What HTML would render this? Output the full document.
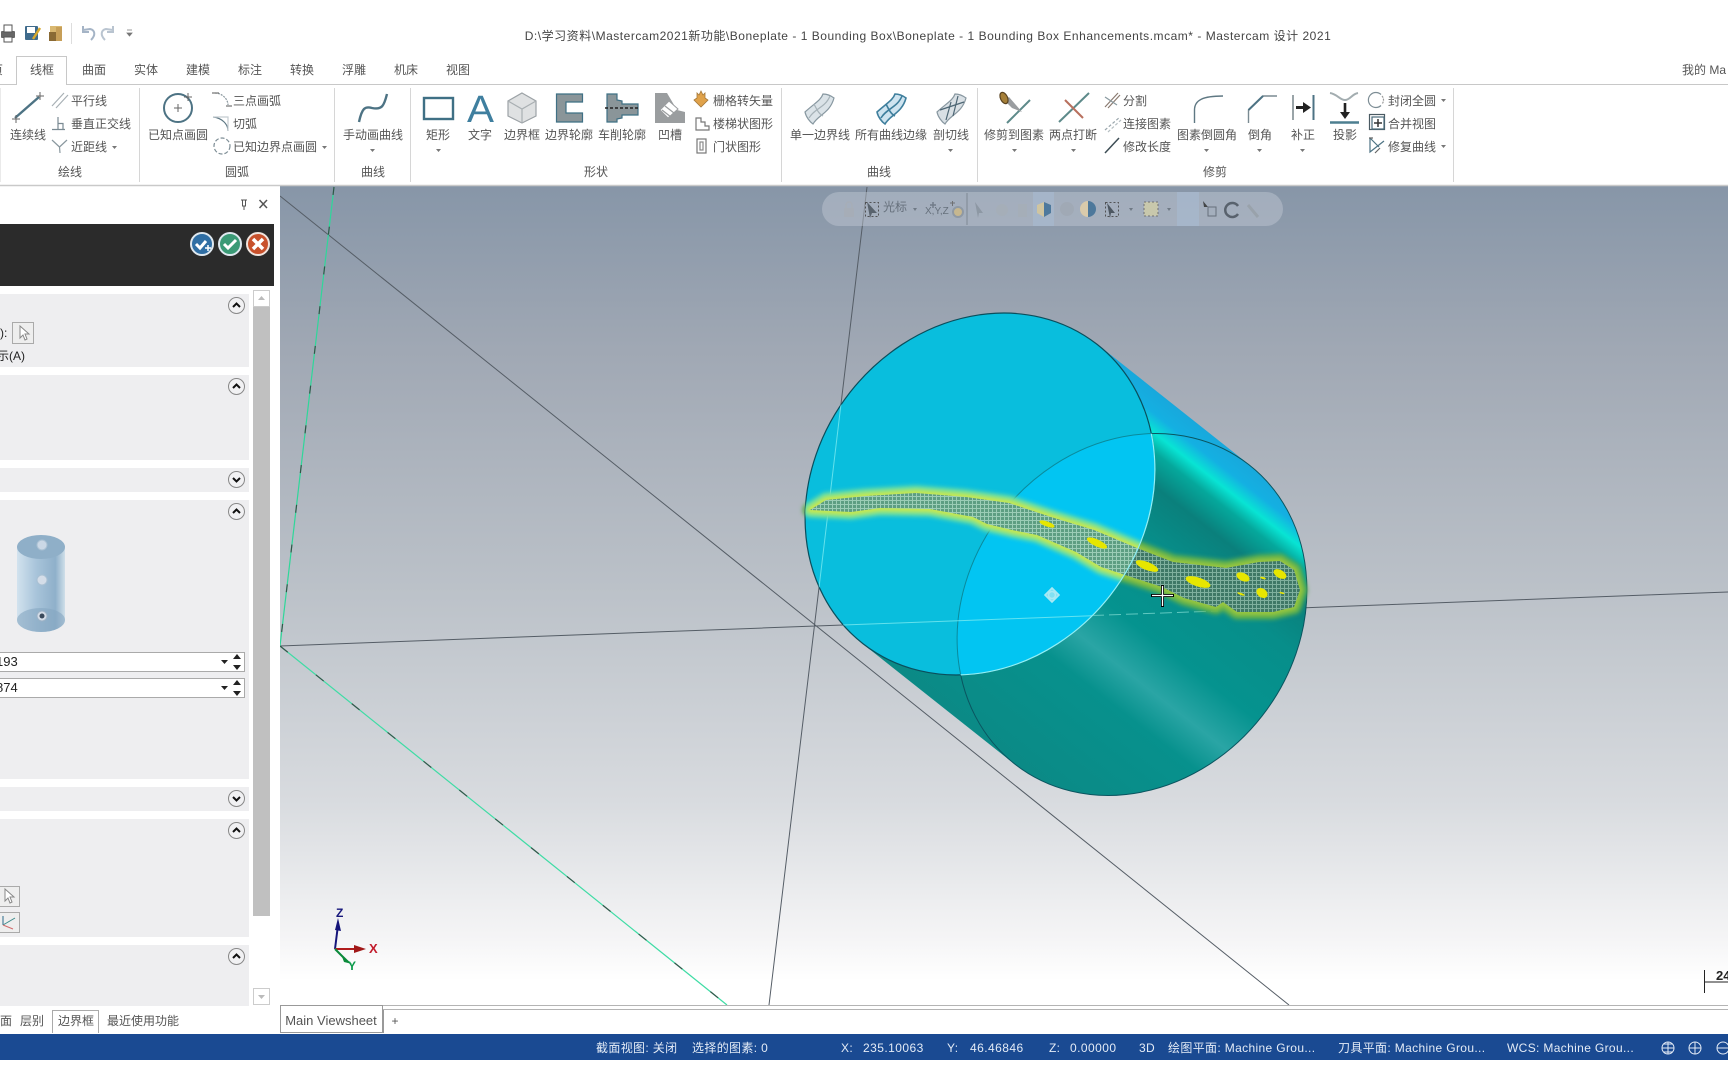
<!DOCTYPE html>
<html lang="zh"><head><meta charset="utf-8"><title>Mastercam 设计 2021</title>
<style>
html,body{margin:0;padding:0;background:#fff}
#p{position:relative;width:1728px;height:1080px;overflow:hidden;background:#fff;font-family:"Liberation Sans","Noto Sans CJK SC",sans-serif;font-size:12px;color:#555;filter:blur(.3px)}
.t{position:absolute;line-height:16px;white-space:nowrap}
.c{transform:translateX(-50%)}
.s{position:absolute;color:#e3ebf6;line-height:16px;top:1040px;white-space:nowrap;font-size:12px;letter-spacing:.35px}
.n{letter-spacing:.45px}
.sec{position:absolute;left:0;width:249px;background:#eeeef0}
.cb{position:absolute;left:228px;width:15px;height:15px;border:1px solid #888;border-radius:50%;background:#f1f1f3}
.cb svg{position:absolute;left:2px;top:2px}
.b{position:absolute;background:#fff;border:1px solid #aaa;box-sizing:border-box}
svg{position:absolute;left:0;top:0;display:block}
</style></head><body><div id="p">

<!-- viewport -->
<svg width="1728" height="1080" viewBox="0 0 1728 1080">
<defs>
<linearGradient id="bg" x1="0" y1="0" x2="0" y2="1">
<stop offset="0" stop-color="#8796a8"/><stop offset=".2" stop-color="#a0a8b4"/><stop offset=".5" stop-color="#bcc2c9"/><stop offset=".75" stop-color="#d8dbdf"/><stop offset=".92" stop-color="#f5f5f6"/><stop offset=".97" stop-color="#fff"/><stop offset="1" stop-color="#fff"/>
</linearGradient>
<linearGradient id="body" gradientUnits="userSpaceOnUse" x1="1173" y1="404" x2="939" y2="704">
<stop offset="0" stop-color="#18a8dc"/><stop offset=".05" stop-color="#14b0e2"/><stop offset=".09" stop-color="#08e4d4"/><stop offset=".13" stop-color="#05a89c"/><stop offset=".2" stop-color="#0a807c"/><stop offset=".32" stop-color="#078e8a"/><stop offset=".52" stop-color="#05938f"/><stop offset=".63" stop-color="#2aa5a5"/><stop offset=".72" stop-color="#07918d"/><stop offset="1" stop-color="#0b8a86"/>
</linearGradient>
<pattern id="hatchL" width="4" height="4" patternUnits="userSpaceOnUse"><rect width="4" height="4" fill="#5d9e82"/><path d="M0 .5H4M.5 0V4" stroke="#9bcdb6" stroke-width="1"/></pattern>
<pattern id="hatchD" width="4" height="4" patternUnits="userSpaceOnUse"><rect width="4" height="4" fill="#3f7866"/><path d="M0 .5H4M.5 0V4" stroke="#7fb09e" stroke-width="1"/></pattern>
<clipPath id="front"><ellipse cx="980" cy="494" rx="190" ry="165" transform="rotate(-52 980 494)"/></clipPath>
<clipPath id="rear"><ellipse cx="1132" cy="614.500" rx="190" ry="165" transform="rotate(-52 1132 614.500)"/></clipPath>
<filter id="bl" x="-5%" y="-20%" width="110%" height="140%"><feGaussianBlur stdDeviation="2"/></filter>
<path id="band" d="M810 510L826 500 866 496 916 493 966 497 1009 503 1051 517 1094 530 1137 548 1173 562 1226 568 1259 562 1280 561 1294 570 1300 590 1294 607 1273 612 1237 612 1223 602 1216 607 1184 598 1162 587 1125 575 1101 567 1076 552 1037 535 1012 530 987 524 973 517 930 509 880 508 851 512Z"/>
</defs>
<rect x="280" y="186" width="1448" height="819" fill="url(#bg)"/>
<g fill="none">
<path d="M280 196L1289 1005M867 187L769 1005M280 646L1728 592" stroke="#555d66" stroke-width="1"/>
<path d="M334 187L280 646" stroke="#2fd79a" stroke-width="1.200"/>
<path d="M334 187L280 646" stroke="#333" stroke-width="1.200" stroke-dasharray="8 32" opacity=".8"/>
<path d="M280 646L727 1005" stroke="#3fdca5" stroke-width="1.200"/>
<path d="M280 646L727 1005" stroke="#333" stroke-width="1.200" stroke-dasharray="10 36" opacity=".8"/>
</g>
<!-- cylinder -->
<path d="M1097 344L1249 464.500 1015 764.500 863 644Z" fill="url(#body)"/>
<rect x="900" y="400" width="450" height="420" fill="url(#body)" clip-path="url(#rear)"/>
<ellipse cx="1132" cy="614.500" rx="190" ry="165" transform="rotate(-52 1132 614.500)" fill="none" stroke="#0a5560" stroke-width="1"/>
<path d="M1092 615.500L1218 611" stroke="#5fc8c0" stroke-width="1" stroke-dasharray="12 5"/>
<use href="#band" fill="none" stroke="#5caf50" stroke-width="15" stroke-linejoin="round" filter="url(#bl)"/>
<use href="#band" fill="none" stroke="#9cc83c" stroke-width="6" stroke-linejoin="round" filter="url(#bl)"/>
<use href="#band" fill="url(#hatchD)"/>
<ellipse cx="980" cy="494" rx="190" ry="165" transform="rotate(-52 980 494)" fill="#09bedd" stroke="#0a4e5c" stroke-width="1.200"/>
<g clip-path="url(#front)">
<ellipse cx="1132" cy="614.500" rx="190" ry="165" transform="rotate(-52 1132 614.500)" fill="#02c5f2" stroke="#0a8a9c" stroke-width="1"/>
<path d="M867 187L769 1005M280 646L1728 592" stroke="#7beaf0" stroke-width="1" opacity=".8" fill="none"/>
<use href="#band" fill="none" stroke="#71e0a0" stroke-width="15" stroke-linejoin="round" filter="url(#bl)"/>
<use href="#band" fill="none" stroke="#cfe84a" stroke-width="6" stroke-linejoin="round" filter="url(#bl)"/>
<use href="#band" fill="url(#hatchL)"/>
</g>
<g clip-path="url(#rear)"><ellipse cx="980" cy="494" rx="190" ry="165" transform="rotate(-52 980 494)" fill="none" stroke="#8ff0f5" stroke-width="1.200"/></g>
<g fill="#e6e600">
<ellipse cx="1047" cy="524" rx="8" ry="2.500" transform="rotate(20 1047 524)"/>
<ellipse cx="1097" cy="543" rx="11" ry="3.500" transform="rotate(25 1097 543)"/>
<ellipse cx="1147" cy="566" rx="12" ry="4" transform="rotate(22 1147 566)"/>
<ellipse cx="1198" cy="582" rx="13" ry="4.500" transform="rotate(18 1198 582)"/>
<ellipse cx="1243" cy="577" rx="7" ry="4" transform="rotate(25 1243 577)"/>
<ellipse cx="1280" cy="574" rx="7" ry="4" transform="rotate(30 1280 574)"/>
<ellipse cx="1262" cy="593" rx="6" ry="4.500" transform="rotate(35 1262 593)"/>
<ellipse cx="1241" cy="594" rx="4" ry="1" transform="rotate(20 1241 594)"/>
<ellipse cx="1263" cy="578" rx="3" ry="1" transform="rotate(15 1263 578)"/>
<ellipse cx="1282" cy="593" rx="2.500" ry=".8" transform="rotate(15 1282 593)"/>
</g>
<g stroke="#000" stroke-width="3"><path d="M1151 595.500H1174M1162.500 585V607"/></g>
<g stroke="#fff" stroke-width="1.300"><path d="M1152 595.500H1173M1162.500 586V606"/></g>
<g transform="translate(1052 595)" fill="none" stroke="#bdeef5" stroke-width="1.600" opacity=".9"><path d="M0-7L7 0 0 7-7 0Z" fill="#8fe4f2"/><circle r="3.500"/></g>

<!-- floating toolbar -->
<rect x="822" y="192" width="461" height="34" rx="17" fill="#c4cad4" opacity=".45"/>
<rect x="1033" y="192" width="21" height="34" fill="#a8bcd4" opacity=".55"/>
<rect x="1177" y="192" width="22" height="34" fill="#a8bcd4" opacity=".55"/>
<path d="M967 193V225" stroke="#7e8894"/>
<g opacity=".85">
<rect x="844" y="208" width="10" height="9" rx="1" fill="#a7adb6"/><path d="M846 208v-3a3 3 0 0 1 6 0v3" fill="none" stroke="#a7adb6" stroke-width="1.500"/>
<path d="M867 202L877 213 872 213 870 218Z" fill="#4d5660"/><rect x="865.500" y="202.500" width="13" height="14" fill="none" stroke="#444" stroke-dasharray="2 2"/>
<path d="M913 208h4l-2 3ZM1129 208h4l-2 3ZM1167 208h4l-2 3ZM1043 208h4l-2 3Z" fill="#66707c"/>
<path d="M933 202v6M930 205h6" stroke="#6a7480" stroke-width="1.500"/>
<circle cx="958" cy="212" r="5" fill="#cdb988" stroke="#8c96a0" stroke-width="2"/><path d="M950 203h5M952.500 201v5" stroke="#666"/>
<path d="M975 202L983 213 979 213 978 218Z" fill="#8a94a0"/>
<circle cx="1002" cy="210" r="6" fill="#a6aeb8"/><rect x="1018" y="204" width="9" height="13" fill="#a6aeb8"/>
<path d="M1037 205l7-3 7 3v8l-7 4-7-4Z" fill="#d8c89a"/><path d="M1044 202l7 3v8l-7 4Z" fill="#3f6f96"/>
<circle cx="1067" cy="209" r="7" fill="#a0a9b4"/>
<path d="M1088 201a8 8 0 0 0 0 16Z" fill="#e3cfa8"/><path d="M1088 201a8 8 0 0 1 0 16Z" fill="#3f6f96"/>
<path d="M1107 203L1115 213 1111 213 1110 218Z" fill="#3e4852"/><rect x="1105.500" y="202.500" width="13" height="14" fill="none" stroke="#444" stroke-dasharray="2 2"/>
<rect x="1144" y="202" width="14" height="14" fill="#cfcdaa" stroke="#666" stroke-dasharray="2 2"/>
<path d="M1203 201L1208 207 1204 207Z" fill="#333"/><rect x="1208" y="207" width="8" height="9" fill="none" stroke="#5c6570"/>
<path d="M1238 206a7 7 0 1 0 0 8" fill="none" stroke="#4c5560" stroke-width="2.500"/>
<path d="M1248 205L1258 217" stroke="#98a0a8" stroke-width="3"/>
</g>

<!-- gizmo -->
<g fill="none" stroke-width="2"><path d="M335 949L338 925" stroke="#15157a"/><path d="M335 949H358" stroke="#b01c1c"/><path d="M335 949L346 960" stroke="#0b8a3a"/></g>
<path d="M335 930L338 918 341 931Z" fill="#15157a"/>
<path d="M354 945L366 949 354 953Z" fill="#a01818"/><path d="M341 954L352 964 344 962Z" fill="#0b8a3a"/>
<text x="336" y="917" font-family="Liberation Sans" font-weight="bold" font-size="12" fill="#15157a">Z</text>
<text x="369" y="953" font-family="Liberation Sans" font-weight="bold" font-size="13" fill="#c21c2c">X</text>
<text x="348" y="970" font-family="Liberation Sans" font-weight="bold" font-size="12" fill="#0b9a4a">Y</text>
<!-- ruler -->
<path d="M1704.500 970V993M1704.500 982H1728" stroke="#222" stroke-width="1"/>
<text x="1716" y="980" font-family="Liberation Sans" font-weight="bold" font-size="13" fill="#222">24</text>

<rect x="0" y="1005" width="1728" height="30" fill="#fff"/>
<path d="M280 1005.500H1728M280 1009.500H1728" stroke="#b4b4b4" stroke-width="1"/>
<rect x="0" y="1034" width="1728" height="26" fill="#1a4a92"/>
<rect x="0" y="186" width="280" height="820" fill="#fff"/>
<rect x="0" y="0" width="1728" height="186" fill="#fff"/>
<path d="M0 84.500H16.500V56.500H66.500V84.500H1728" fill="none" stroke="#c8c8c8"/>
<path d="M0 185.500H1728" stroke="#c9c9c9" stroke-width="1.500"/>
<path d="M139.500 88V182M334.500 88V182M410.500 88V182M781.500 88V182M977.500 88V182M1453.500 88V182" stroke="#d6d6d6" stroke-width="1"/>
<path d="M0 88V182" stroke="#d6d6d6" stroke-width="1"/>

<!-- quick access -->
<g>
<rect x="1" y="31" width="14" height="7" rx="1" fill="#666"/><rect x="4" y="25" width="8" height="7" fill="#fff" stroke="#555"/><rect x="4" y="37" width="8" height="5" fill="#fff" stroke="#555"/>
<rect x="25" y="26" width="13" height="14" rx="1" fill="#3f6b8c"/><rect x="27" y="27" width="8" height="6" fill="#fff"/><path d="M33 39L40 28" stroke="#d8a82c" stroke-width="2.500"/>
<rect x="50" y="26" width="12" height="6" fill="#d9b871"/><rect x="49" y="32" width="7" height="9" fill="#8a6a34"/><rect x="56" y="27" width="6" height="14" fill="#c79f58"/>
<path d="M71.500 23V44" stroke="#ddd"/>
<path d="M91 40c5-5 4-10-1-11l-7 1M83 26v6h6" fill="none" stroke="#a5b4c6" stroke-width="2"/>
<path d="M105 40c-5-5-4-10 1-11l7 1M113 26v6h-6" fill="none" stroke="#b9c4d0" stroke-width="2"/>
<path d="M127 30h5M127 33h5L129.500 36Z" fill="#777" stroke="#777" stroke-width=".8"/>
</g>

<!-- ribbon icons -->
<g fill="none" stroke="#4d7384" stroke-width="1.200">
<!-- continuous line -->
<path d="M15 118L39 97" stroke-width="2.400"/><path d="M36 96H44M40 92V100M12 119H20M16 115V123" stroke="#666" stroke-width="1"/>
<!-- parallel -->
<path d="M52 106L64 93M56 108L68 95" stroke="#a8b0b5"/>
<!-- perpendicular -->
<path d="M52 129.500H65M58 117V129.500M58 123.500H63V129.500" stroke="#7a8a92"/>
<!-- near -->
<path d="M52 140L59.500 147 67 140M59.500 147L60 153" stroke="#8a989f"/>
<!-- circle -->
<circle cx="178" cy="108" r="14" stroke-width="2"/><path d="M174 108H182M178 104V112M184 97H192M188 93V101" stroke="#666" stroke-width="1"/>
<!-- arcs -->
<path d="M215 93C222 93 228 99 228 105" stroke="#8b989f" stroke-dasharray="2 1"/><path d="M212 93H219M226 106H232" stroke="#777"/>
<path d="M213 117C222 118 228 124 228 131" stroke="#5e7884"/><path d="M213 117H228V131" stroke="#c4ccd0"/>
<circle cx="222" cy="146" r="8" stroke="#7d8d95" stroke-dasharray="4 2"/>
<!-- spline -->
<path d="M359 122C362 108 365 106 372 108C382 110 384 106 387 94" stroke-width="2.400"/>
<!-- rect -->
<rect x="424" y="98" width="29" height="21" stroke="#3f7085" stroke-width="2.400"/>
<!-- cube -->
<path d="M522 93L536 101V116L522 123 508 116V101Z" fill="#dfe1e2" stroke="#9ca2a6"/><path d="M508 101L522 109 536 101M522 109V123" stroke="#a9afb2"/>
<!-- contour -->
<path d="M556.500 94H582.500V102H566V113H582.500V122H556.500Z" fill="#8a9599" stroke="#3f7085" stroke-width="1.200"/>
<!-- turn -->
<path d="M607 94H617V100L622 101V104H638V115H622V118L617 119V122H607Z" fill="#8a9599" stroke="#3f7085" stroke-width="1.200"/>
<path d="M605 108H638" stroke="#222" stroke-width="1.500" stroke-dasharray="3 2"/>
<!-- pocket -->
<path d="M655 93H667L677 110 685 112V123H655Z" fill="#9a9d9f" stroke="none"/>
<path d="M660 110L669 101 678 109 668 118Z" fill="#fff" stroke="#9a9d9f" stroke-width="1"/>
<path d="M665 106L674 113M662 110L671 117" stroke="#9a9d9f"/>
<!-- raster etc -->
<path d="M694 100L697 98V93L699 95 701 91 703 95 705 93V98L708 100 701 107Z" fill="#e0a24a" stroke="#a6793a" stroke-width=".8"/>
<path d="M696 118H701V122H705V126H709V130H696Z" stroke="#777"/>
<rect x="697" y="139" width="9" height="14" stroke="#777"/><rect x="700" y="142" width="3" height="8" stroke="#888"/>
<!-- surfaces -->
<g transform="translate(-72 0)" stroke="#8797a0"><path d="M895 94C893 100 887 103 877 112 878 117 882 122 885 124 890 115 902 113 906 98 902 95 898 94 895 94Z" fill="#dbe3e8"/><path d="M881 118C887 108 897 108 902 96" stroke="#a6b2b8"/><path d="M886 104C889 110 891 114 895 116" stroke="#a6b2b8"/></g>
<g stroke="#3f7f9d" stroke-width="1.600"><path d="M895 94C893 100 887 103 877 112 878 117 882 122 885 124 890 115 902 113 906 98 902 95 898 94 895 94Z" fill="#cfe4f0"/><path d="M881 118C887 108 897 108 902 96"/><path d="M886 104C889 110 891 114 895 116"/></g>
<g transform="translate(60 0)" stroke="#8897a0"><path d="M895 94C893 100 887 103 877 112 878 117 882 122 885 124 890 115 902 113 906 98 902 95 898 94 895 94Z" fill="#d9e0e5"/><path d="M886 120L891 102M893 116L898 96M880 110L904 102" stroke="#4d6674"/></g>
<!-- trim -->
<path d="M1007 123L1030 100" stroke="#5d8a8a" stroke-width="2"/>
<path d="M1004 100L1009 97 1022 112 1012 108Z" fill="#9a9da0" stroke="none"/><ellipse cx="1004" cy="98" rx="3.500" ry="6" fill="#a57f38" stroke="#5a4320" transform="rotate(-25 1004 98)"/>
<path d="M1059 122L1089 93" stroke="#5d8a8a" stroke-width="2"/><path d="M1065 100L1083 118" stroke="#b8705e" stroke-width="2"/>
<path d="M1105 107L1118 93M1108 108L1120 95" stroke="#8a7a70"/><path d="M1105 97L1117 105" stroke="#8a9aa0"/>
<path d="M1105 130L1120 117" stroke="#9aa6ac" stroke-dasharray="3 2"/><path d="M1108 132L1121 120" stroke="#b5bec2" stroke-dasharray="3 2"/>
<path d="M1105 153L1119 138" stroke="#3d4d55" stroke-width="1.500"/>
<!-- fillet -->
<path d="M1194.500 123V110C1194.500 100 1203 96 1223 96" stroke="#5f7883" stroke-width="1.400"/>
<path d="M1248.500 123V110L1263 96H1277" stroke="#7a8a92" stroke-width="1.400"/><path d="M1248.500 110L1263 96" stroke="#4d7384" stroke-width="2"/>
<path d="M1293 95V120" stroke="#9aa4a8" stroke-width="2"/><path d="M1313.500 95V120" stroke="#4d7384" stroke-width="2"/>
<path d="M1296 107.500H1304" stroke="#222" stroke-width="3"/><path d="M1303 102L1311 107.500 1303 113Z" fill="#222" stroke="none"/>
<path d="M1330 93C1337 94 1340 100 1345 100 1350 100 1352 94 1358 93" stroke="#a3adb0" stroke-width="2"/><path d="M1345 103V113" stroke="#222" stroke-width="2.600"/><path d="M1340 112L1345 119 1350 112Z" fill="#222" stroke="none"/><path d="M1330 122.500H1359" stroke="#4d7f90" stroke-width="2.400"/>
<path d="M1381 94.500A7.500 7.500 0 1 0 1381 105.500" stroke="#7d8d95"/><path d="M1382 96A6 6 0 0 1 1382 104" stroke="#999" stroke-dasharray="2 1"/>
<rect x="1369.500" y="114.500" width="15" height="15" stroke="#4a5a62"/><rect x="1372" y="117" width="12" height="12" stroke="#4a6a7a"/><path d="M1374 123H1382M1378 119V127" stroke="#333" stroke-width="1.500"/>
<path d="M1370 138V152L1384 141M1370 138L1379 147" stroke="#4d7384"/><path d="M1369 138H1373M1380 148L1375 153" stroke="#666"/>
</g>
<text x="467" y="122" font-family="Liberation Sans" font-size="38" fill="#3f7f9f" textLength="27" lengthAdjust="spacingAndGlyphs">A</text>

<g fill="#777"><path d="M112 146h5l-2.500 3ZM322 146h5l-2.500 3ZM370 149h5l-2.500 3ZM436 149h5l-2.500 3ZM948 149h5l-2.500 3ZM1012 149h5l-2.500 3ZM1071 149h5l-2.500 3ZM1204 149h5l-2.500 3ZM1257 149h5l-2.500 3ZM1300 149h5l-2.500 3ZM1441 99h5l-2.500 3ZM1441 145h5l-2.500 3Z"/></g>

<!-- panel -->
<path d="M241 200h6M242.500 200V206h3V200M244 206V210" fill="none" stroke="#555"/>
<path d="M259.500 200L267 208M267 200L259.500 208" stroke="#555" stroke-width="1.500"/>
</svg>

<div style="position:absolute;left:0;top:224px;width:274px;height:62px;background:#2b2b2b"></div>
<svg width="290" height="300" viewBox="0 0 290 300" style="top:0">
<circle cx="202" cy="244" r="11" fill="#2f6ea4" stroke="#dfe8ef" stroke-width="2"/><path d="M196 244l4 4 6-7" stroke="#fff" stroke-width="3" fill="none"/><path d="M205 248h6M208 245v6" stroke="#fff" stroke-width="1.500"/>
<circle cx="230" cy="244" r="11" fill="#3b9a76" stroke="#dfe8ef" stroke-width="2"/><path d="M224 244l4 4 8-8" stroke="#fff" stroke-width="3" fill="none"/>
<circle cx="258" cy="244" r="11" fill="#c8512c" stroke="#f0e4de" stroke-width="2"/><path d="M253 239l10 10M263 239l-10 10" stroke="#fff" stroke-width="3.500"/>
</svg>

<div class="sec" style="top:294px;height:73px"></div>
<div class="sec" style="top:375px;height:85px"></div>
<div class="sec" style="top:468px;height:24px"></div>
<div class="sec" style="top:500px;height:279px"></div>
<div class="sec" style="top:787px;height:24px"></div>
<div class="sec" style="top:819px;height:118px"></div>
<div class="sec" style="top:945px;height:61px"></div>

<div class="cb" style="top:297px"><svg width="11" height="11"><path d="M2 7L5.500 3.500 9 7" fill="none" stroke="#111" stroke-width="2"/></svg></div>
<div class="cb" style="top:378px"><svg width="11" height="11"><path d="M2 7L5.500 3.500 9 7" fill="none" stroke="#111" stroke-width="2"/></svg></div>
<div class="cb" style="top:471px"><svg width="11" height="11"><path d="M2 4L5.500 7.500 9 4" fill="none" stroke="#111" stroke-width="2"/></svg></div>
<div class="cb" style="top:503px"><svg width="11" height="11"><path d="M2 7L5.500 3.500 9 7" fill="none" stroke="#111" stroke-width="2"/></svg></div>
<div class="cb" style="top:790px"><svg width="11" height="11"><path d="M2 4L5.500 7.500 9 4" fill="none" stroke="#111" stroke-width="2"/></svg></div>
<div class="cb" style="top:822px"><svg width="11" height="11"><path d="M2 7L5.500 3.500 9 7" fill="none" stroke="#111" stroke-width="2"/></svg></div>
<div class="cb" style="top:948px"><svg width="11" height="11"><path d="M2 7L5.500 3.500 9 7" fill="none" stroke="#111" stroke-width="2"/></svg></div>

<!-- scrollbar -->
<div style="position:absolute;left:253px;top:307px;width:17px;height:609px;background:#c0c0c0"></div>
<div style="position:absolute;left:253px;top:290px;width:17px;height:17px;border:1px solid #ccc;box-sizing:border-box;background:#fff"><svg width="15" height="15"><path d="M4 9h7L7.500 5Z" fill="#bbb"/></svg></div>
<div style="position:absolute;left:253px;top:988px;width:17px;height:17px;border:1px solid #ccc;box-sizing:border-box;background:#fff"><svg width="15" height="15"><path d="M4 6h7L7.500 10Z" fill="#bbb"/></svg></div>

<!-- panel controls -->
<span class="t" style="left:0;top:325px;color:#222">):</span>
<div class="b" style="left:12px;top:322px;width:22px;height:22px;background:#eee"><svg width="20" height="20"><path d="M7 3V15L10 12 12 17 14 16 12 11H16Z" fill="#fff" stroke="#888"/></svg></div>
<span class="t" style="left:-3px;top:348px;color:#222">示(A)</span>

<svg width="290" height="660" viewBox="0 0 290 660" style="top:0">
<defs><linearGradient id="cy" x1="0" y1="0" x2="1" y2="0"><stop offset="0" stop-color="#d2e2ee"/><stop offset=".4" stop-color="#a8c4da"/><stop offset=".8" stop-color="#8fb0ca"/><stop offset="1" stop-color="#cfdfe9"/></linearGradient></defs>
<path d="M17 548V620A24 12 0 0 0 65 620V548Z" fill="url(#cy)"/>
<ellipse cx="41" cy="547" rx="24" ry="12" fill="#8fafc8"/>
<ellipse cx="41" cy="620" rx="24" ry="12" fill="#85a7c2" opacity=".6"/>
<circle cx="42" cy="545" r="5" fill="#cbd8e6" stroke="#a9c0d3"/><circle cx="42" cy="580" r="5" fill="#d4dde8" stroke="#a9c0d3"/><circle cx="42" cy="616" r="5" fill="#d4dde8" stroke="#9cb2c6"/><circle cx="42" cy="616" r="2.500" fill="#3a4a5c"/>
</svg>

<div class="b" style="left:-2px;top:652px;width:247px;height:20px"></div>
<div class="b" style="left:-2px;top:678px;width:247px;height:20px"></div>
<span class="t" style="left:-4px;top:654px;color:#222;font-size:13px">193</span>
<span class="t" style="left:-4px;top:680px;color:#222;font-size:13px">874</span>
<svg width="290" height="720" viewBox="0 0 290 720" style="top:0" fill="#222">
<path d="M221 660h7l-3.500 4ZM233 659l4-5 4 5ZM233 665h8l-4 5ZM221 686h7l-3.500 4ZM233 685l4-5 4 5ZM233 691h8l-4 5Z"/>
</svg>

<div class="b" style="left:-2px;top:886px;width:22px;height:21px;background:#eee"><svg width="20" height="19"><path d="M6 2V14L9 11 11 16 13 15 11 10H15Z" fill="#fff" stroke="#888"/></svg></div>
<div class="b" style="left:-2px;top:912px;width:22px;height:21px;background:#eee"><svg width="20" height="19" fill="none"><path d="M4 12V3" stroke="#2b6a8a"/><path d="M4 12L16 5" stroke="#3a8a8a"/><path d="M4 12L14 16" stroke="#d06a6a"/></svg></div>

<!-- lower panel tabs -->
<span class="t" style="left:0;top:1013px">面</span>
<span class="t" style="left:20px;top:1013px">层别</span>
<div class="b" style="left:52px;top:1010px;width:47px;height:23px;border-bottom:0"></div>
<span class="t c" style="left:76px;top:1013px">边界框</span>
<span class="t" style="left:107px;top:1013px">最近使用功能</span>
<div class="b" style="left:280px;top:1005px;width:103px;height:28px;border-color:#999"></div>
<span class="t c" style="left:331px;top:1013px;font-size:13px">Main Viewsheet</span>
<span class="t c" style="left:395px;top:1013px">+</span>
<div style="position:absolute;left:383px;top:1010px;width:1px;height:23px;background:#999"></div>

<!-- title & tabs -->
<span class="t c" style="left:928px;top:28px;font-size:12px;color:#444;letter-spacing:.52px">D:\学习资料\Mastercam2021新功能\Boneplate - 1 Bounding Box\Boneplate - 1 Bounding Box Enhancements.mcam* - Mastercam 设计 2021</span>
<span class="t c" style="left:42px;top:62px">线框</span><span class="t c" style="left:94px;top:62px">曲面</span><span class="t c" style="left:146px;top:62px">实体</span><span class="t c" style="left:198px;top:62px">建模</span><span class="t c" style="left:250px;top:62px">标注</span><span class="t c" style="left:302px;top:62px">转换</span><span class="t c" style="left:354px;top:62px">浮雕</span><span class="t c" style="left:406px;top:62px">机床</span><span class="t c" style="left:458px;top:62px">视图</span>
<span class="t" style="left:-9px;top:62px">页</span>
<span class="t" style="left:1682px;top:62px">我的 Ma</span>

<!-- ribbon text -->
<span class="t c" style="left:28px;top:127px">连续线</span>
<span class="t" style="left:71px;top:93px">平行线</span><span class="t" style="left:71px;top:116px">垂直正交线</span><span class="t" style="left:71px;top:139px">近距线</span>
<span class="t c" style="left:178px;top:127px">已知点画圆</span>
<span class="t" style="left:233px;top:93px">三点画弧</span><span class="t" style="left:233px;top:116px">切弧</span><span class="t" style="left:233px;top:139px">已知边界点画圆</span>
<span class="t c" style="left:373px;top:127px">手动画曲线</span>
<span class="t c" style="left:438px;top:127px">矩形</span><span class="t c" style="left:480px;top:127px">文字</span><span class="t c" style="left:522px;top:127px">边界框</span><span class="t c" style="left:569px;top:127px">边界轮廓</span><span class="t c" style="left:622px;top:127px">车削轮廓</span><span class="t c" style="left:670px;top:127px">凹槽</span>
<span class="t" style="left:713px;top:93px">栅格转矢量</span><span class="t" style="left:713px;top:116px">楼梯状图形</span><span class="t" style="left:713px;top:139px">门状图形</span>
<span class="t c" style="left:820px;top:127px">单一边界线</span><span class="t c" style="left:891px;top:127px">所有曲线边缘</span><span class="t c" style="left:951px;top:127px">剖切线</span>
<span class="t c" style="left:1014px;top:127px">修剪到图素</span><span class="t c" style="left:1073px;top:127px">两点打断</span>
<span class="t" style="left:1123px;top:93px">分割</span><span class="t" style="left:1123px;top:116px">连接图素</span><span class="t" style="left:1123px;top:139px">修改长度</span>
<span class="t c" style="left:1207px;top:127px">图素倒圆角</span><span class="t c" style="left:1260px;top:127px">倒角</span><span class="t c" style="left:1303px;top:127px">补正</span><span class="t c" style="left:1345px;top:127px">投影</span>
<span class="t" style="left:1388px;top:93px">封闭全圆</span><span class="t" style="left:1388px;top:116px">合并视图</span><span class="t" style="left:1388px;top:139px">修复曲线</span>
<span class="t c" style="left:70px;top:164px">绘线</span><span class="t c" style="left:237px;top:164px">圆弧</span><span class="t c" style="left:373px;top:164px">曲线</span><span class="t c" style="left:596px;top:164px">形状</span><span class="t c" style="left:879px;top:164px">曲线</span><span class="t c" style="left:1215px;top:164px">修剪</span>

<!-- toolbar text -->
<span class="t" style="left:883px;top:199px;color:#66707c">光标</span>
<span class="t" style="left:925px;top:204px;color:#66707c;font-size:10px">X,Y,Z</span>

<!-- status -->
<span class="s" style="left:596px">截面视图: 关闭</span><span class="s" style="left:692px">选择的图素: 0</span>
<span class="s" style="left:841px">X:</span><span class="s n" style="left:863px">235.10063</span><span class="s" style="left:947px">Y:</span><span class="s n" style="left:970px">46.46846</span><span class="s" style="left:1049px">Z:</span><span class="s n" style="left:1070px">0.00000</span><span class="s" style="left:1139px">3D</span>
<span class="s" style="left:1168px">绘图平面: Machine Grou...</span><span class="s" style="left:1338px">刀具平面: Machine Grou...</span><span class="s" style="left:1507px">WCS: Machine Grou...</span>
<svg width="1728" height="1080" viewBox="0 0 1728 1080" style="pointer-events:none" fill="none" stroke="#e3ebf6">
<circle cx="1668" cy="1048" r="6"/><path d="M1662 1048h12M1668 1042v12M1664 1044h8M1664 1052h8"/>
<circle cx="1695" cy="1048" r="6"/><path d="M1689 1048h12M1695 1042v12"/>
<circle cx="1723" cy="1048" r="6"/><path d="M1717 1048h12"/>
</svg>
</div></body></html>
